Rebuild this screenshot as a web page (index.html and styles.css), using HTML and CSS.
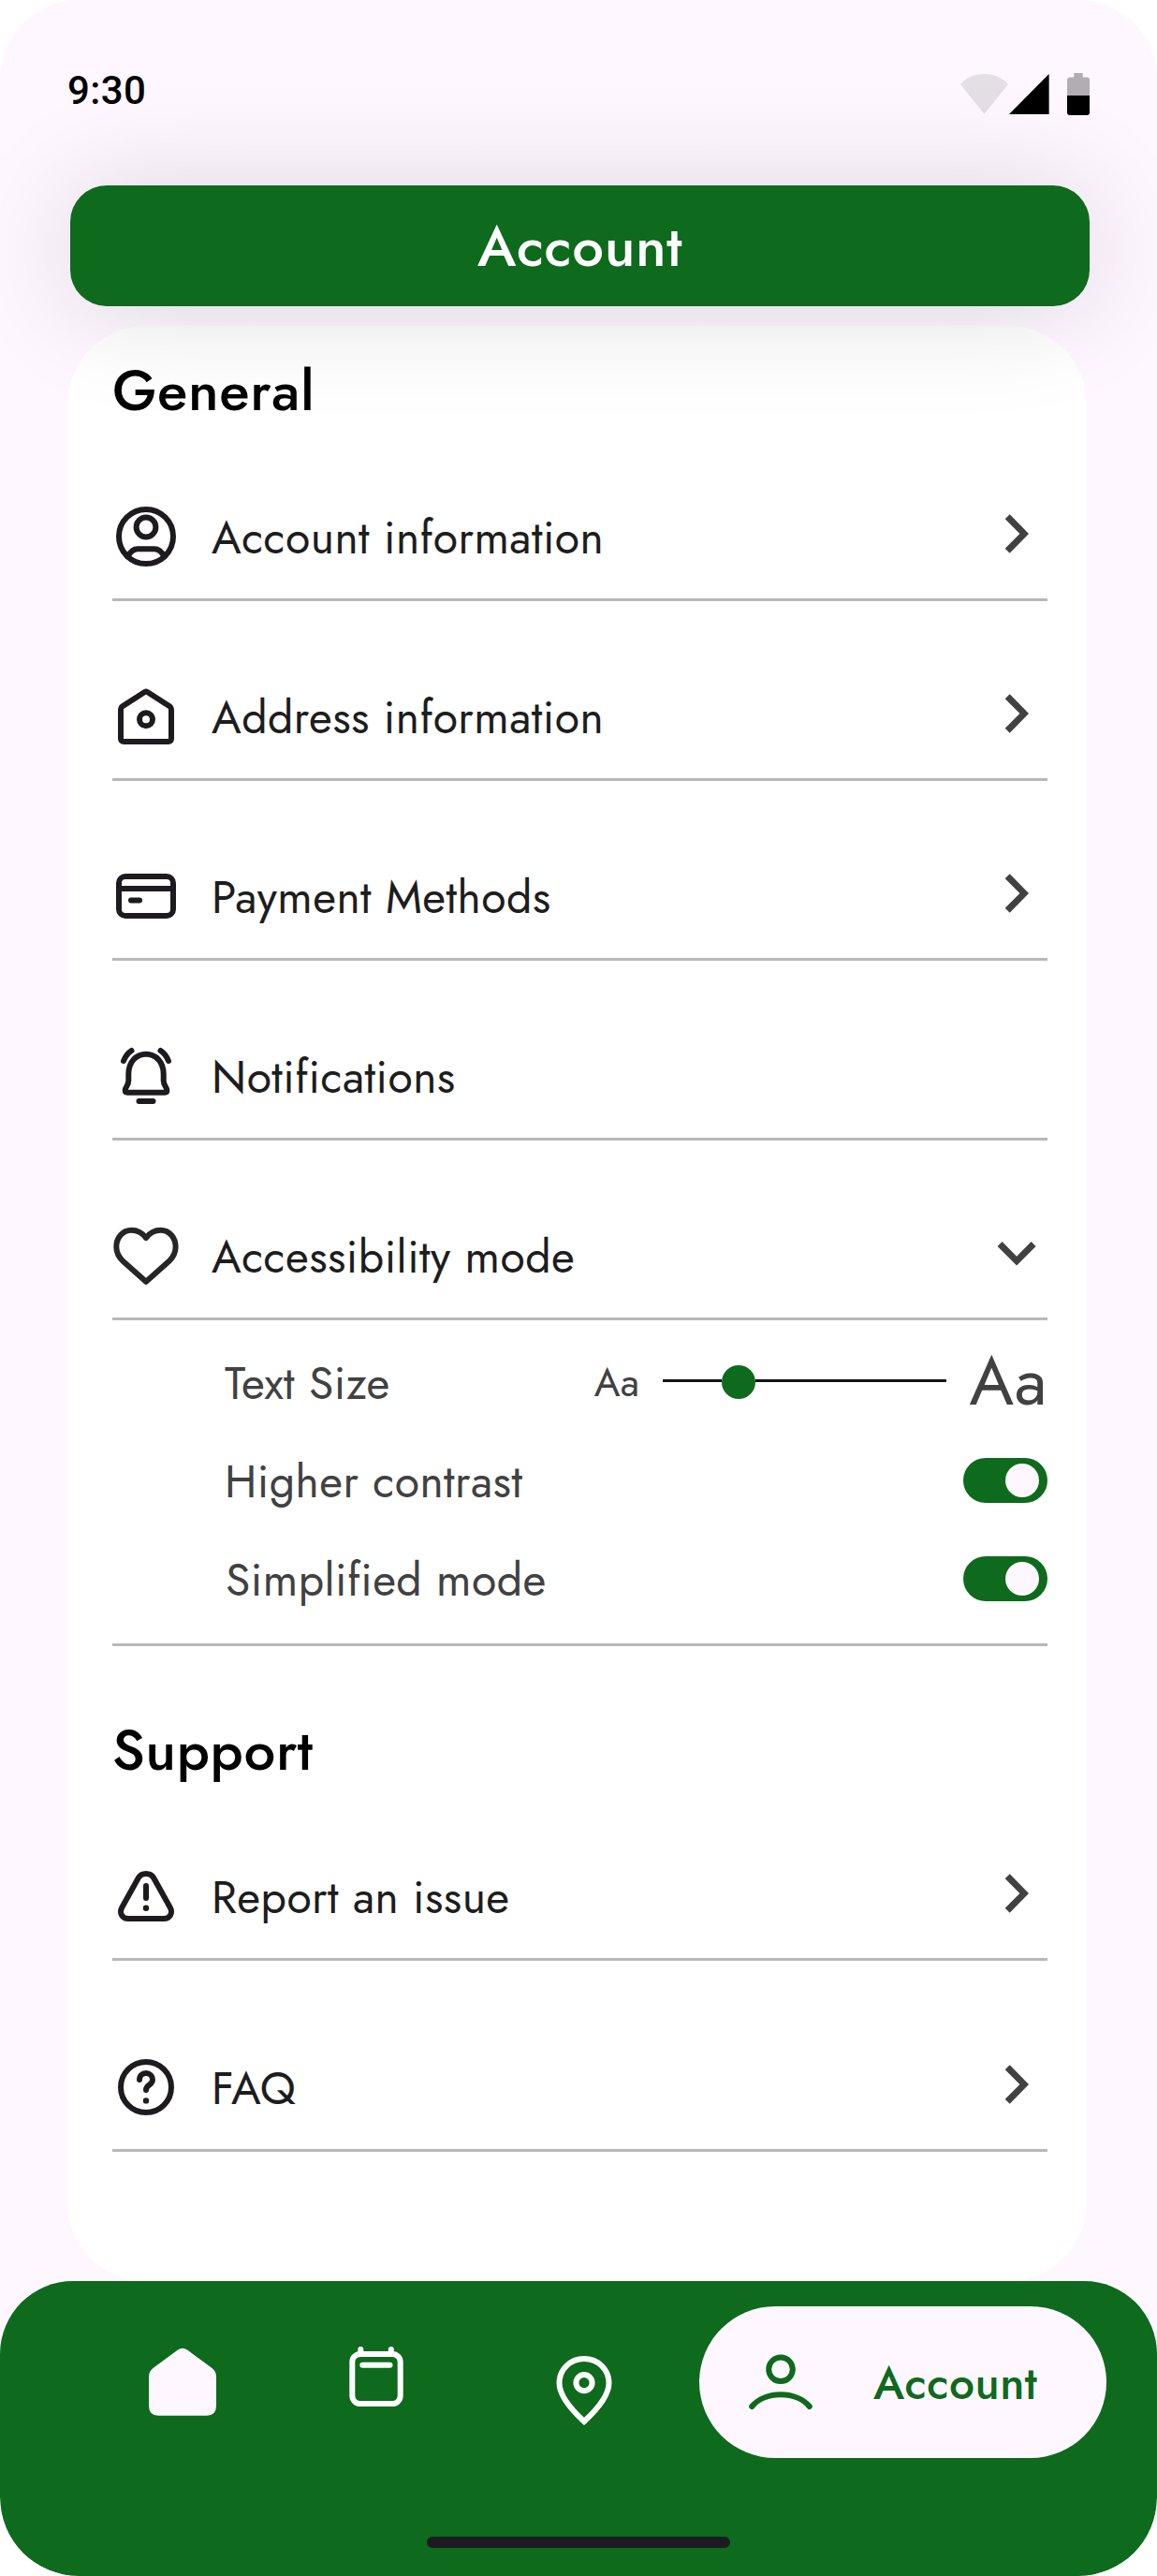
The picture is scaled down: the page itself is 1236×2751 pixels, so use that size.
FILE: index.html
```html
<!DOCTYPE html>
<html lang="en">
<head>
<meta charset="utf-8">
<title>Account</title>
<link rel="stylesheet" href="styles.css">
</head>
<body>
<div class="phone">
  <div class="status">
    <span class="status-time">9:30</span>
    <div class="status-icons">
      <svg class="wifi" width="51" height="45" viewBox="0 0 51 45"><path d="M0 12 C7 4.5 15 1 25.500 1 S44 4.500 51 12 L25.500 43.700 Z" fill="#e4dee5"/></svg>
      <svg class="signal" width="43" height="45" viewBox="0 0 43 45"><path d="M0 44 L42.600 1 V44 Z" fill="#000"/></svg>
      <svg width="24" height="45" viewBox="0 0 24 45"><path d="M0 24 V7.500 Q0 4.500 3 4.500 H7.300 V0 H16.700 V4.500 H21 Q24 4.500 24 7.500 V24 Z" fill="#b2adb3"/><path d="M0 24 H24 V42 Q24 45 21 45 H3 Q0 45 0 42 Z" fill="#000"/></svg>
    </div>
  </div>

  <header class="title-bar"><h1>Account</h1></header>

  <main class="card">
    <h2 class="section-title">General</h2>
    <div class="row">
      <svg class="icon" viewBox="0 0 72 72"><circle cx="36" cy="36" r="29"/><circle cx="36" cy="26" r="10.400"/><path d="M16.500 57.500 C19.500 51.500 22.500 49.200 27 49.200 H45 C49.500 49.200 52.500 51.500 55.500 57.500"/></svg>
      <span class="label">Account information</span>
      <svg class="chevron" viewBox="0 0 66 66"><path d="M20.700 17.300 L25.700 12.300 L46 33 L25.700 53.700 L20.700 48.700 L36.400 33 Z"/></svg>
    </div>
    <div class="row">
      <svg class="icon" viewBox="0 0 72 72"><path d="M9 59.500 V28.500 Q9 26.500 10.500 25.500 L35 9.800 Q36 9.200 37 9.800 L61.500 25.500 Q63 26.500 63 28.500 V59.500 Q63 63 59.500 63 H12.500 Q9 63 9 59.500 Z"/><circle cx="36" cy="39.300" r="7"/></svg>
      <span class="label">Address information</span>
      <svg class="chevron" viewBox="0 0 66 66"><path d="M20.700 17.300 L25.700 12.300 L46 33 L25.700 53.700 L20.700 48.700 L36.400 33 Z"/></svg>
    </div>
    <div class="row">
      <svg class="icon" viewBox="0 0 72 72"><rect x="7" y="15" width="58" height="42" rx="7"/><path d="M7 28 H65 M20 40.500 H29"/></svg>
      <span class="label">Payment Methods</span>
      <svg class="chevron" viewBox="0 0 66 66"><path d="M20.700 17.300 L25.700 12.300 L46 33 L25.700 53.700 L20.700 48.700 L36.400 33 Z"/></svg>
    </div>
    <div class="row">
      <svg class="icon" viewBox="0 0 72 72"><path d="M20.500 9 Q15 12.500 12 20 M51.500 9 Q57 12.500 60 20"/><path d="M17.300 34 C17.300 21 25.500 12.700 36 12.700 S54.700 21 54.700 34 V41 C54.700 47 58.300 47.500 58.300 51.500 Q58.300 53.700 56 53.700 H16 Q13.700 53.700 13.700 51.500 C13.700 47.500 17.300 47 17.300 41 Z M28.500 63 H43.500"/></svg>
      <span class="label">Notifications</span>
    </div>
    <div class="row">
      <svg class="icon heart" viewBox="0 0 72 72"><path d="M36 17 C32 11.500 27 8.700 20.500 8.700 C11 8.700 4.300 17 4.300 26.500 C4.300 33 7 37.500 11 41.500 L36 63.800 L61 41.500 C65 37.500 67.600 33 67.600 26.500 C67.600 17 61 8.700 51.500 8.700 C45 8.700 40 11.500 36 17 Z"/></svg>
      <span class="label">Accessibility mode</span>
      <svg class="chevron" viewBox="0 0 66 66"><path d="M12.600 26 L17.600 21 L33.100 36.700 L48.600 21 L53.600 26 L33.100 46.500 Z"/></svg>
    </div>

    <div class="options">
      <div class="option">
        <span class="option-label">Text Size</span>
        <div class="slider">
          <span class="aa-small">Aa</span>
          <div class="track"><div class="track-start"></div><div class="thumb"></div><div class="track-end"></div></div>
          <span class="aa-large">Aa</span>
        </div>
      </div>
      <div class="option">
        <span class="option-label">Higher contrast</span>
        <div class="toggle"><div class="toggle-knob"></div></div>
      </div>
      <div class="option">
        <span class="option-label simplified">Simplified mode</span>
        <div class="toggle"><div class="toggle-knob"></div></div>
      </div>
    </div>

    <h2 class="section-title support">Support</h2>
    <div class="row">
      <svg class="icon" viewBox="0 0 72 72"><path d="M27.800 16.500 C31 10.500 41 10.500 44.200 16.500 L61.700 48 C65 54 61.500 60 55 60 H17 C10.500 60 7 54 10.300 48 Z M36 25 V38"/><circle class="dot" cx="36" cy="48.700" r="3.200"/></svg>
      <span class="label">Report an issue</span>
      <svg class="chevron" viewBox="0 0 66 66"><path d="M20.700 17.300 L25.700 12.300 L46 33 L25.700 53.700 L20.700 48.700 L36.400 33 Z"/></svg>
    </div>
    <div class="row faq">
      <svg class="icon" viewBox="0 0 72 72"><circle cx="36" cy="36" r="27"/><path d="M29 28 C29 23.500 32 21 36 21 S43 24 43 28 C43 34 36 33 36 39"/><circle class="dot" cx="36" cy="50.400" r="3.200"/></svg>
      <span class="label">FAQ</span>
      <svg class="chevron" viewBox="0 0 66 66"><path d="M20.700 17.300 L25.700 12.300 L46 33 L25.700 53.700 L20.700 48.700 L36.400 33 Z"/></svg>
    </div>
  </main>

  <nav class="nav">
    <div class="nav-items">
      <svg class="nav-home" width="72" height="162" viewBox="0 0 72 162"><path d="M0 75 Q0 69.500 4.500 66 L31 46.600 Q36 43 41 46.600 L67.500 66 Q72 69.500 72 75 V106 Q72 116.700 62 116.700 H10 Q0 116.700 0 106 Z" fill="#fef7ff"/></svg>
      <svg class="nav-calendar" width="60" height="162" viewBox="0 0 60 162"><rect x="4.300" y="51" width="51.400" height="53" rx="8.500"/><path d="M13.300 46 V51 M45.800 46 V51 M15.300 62.700 H44.500"/></svg>
      <svg class="nav-pin" width="60" height="162" viewBox="0 0 60 162"><path d="M30 56 C15 56 3.500 67.500 3.500 82 C3.500 95 16.500 110.500 30 123 C43.500 110.500 56.500 95 56.500 82 C56.500 67.500 45 56 30 56 Z"/><circle cx="30" cy="81.600" r="8.600"/></svg>
      <div class="nav-active">
        <svg width="72" height="162" viewBox="0 0 72 162"><circle cx="36" cy="67.300" r="12.800"/><path d="M5.200 107 C19 90 53 90 66.800 107"/></svg>
        <span>Account</span>
      </div>
    </div>
    <div class="home-indicator"></div>
  </nav>
</div>
</body>
</html>
```
FILE: styles.css
```css
* { box-sizing: border-box; letter-spacing: 0.01em; }

body {
  margin: 0;
  background: #fff;
  font-family: Jost, Lato, sans-serif;
}

h1, h2 { margin: 0; font-weight: 500; }
svg { display: block; flex: none; }

.phone {
  width: 1236px;
  height: 2751px;
  display: flex;
  flex-direction: column;
  background: #fef7ff;
  border-radius: 84px;
  overflow: hidden;
}

/* Status bar */
.status {
  flex: none;
  height: 198px;
  padding: 78px 72px 0;
  display: flex;
  justify-content: space-between;
  align-items: flex-start;
}
.status-time {
  font: 500 42px/38px Roboto, sans-serif;
  color: #000;
}
.status-icons { display: flex; }
.wifi { margin-right: 1px; }
.signal { margin-right: 19px; }

/* Title */
.title-bar {
  flex: none;
  height: 129px;
  margin: 0 72px 21px 75px;
  padding-top: 2px;
  display: flex;
  align-items: center;
  justify-content: center;
  background: #0e6a1c;
  border-radius: 39px;
  box-shadow: 0 4px 120px rgba(0, 0, 0, 0.14);
  position: relative;
  z-index: 1;
}
.title-bar h1 { font-size: 60px; line-height: 87px; color: #fff; }

/* Settings card */
.card {
  flex: none;
  height: 2088px;
  margin: 0 75px 0 72px;
  padding: 0 42px 0 48px;
  background: #fff;
  border-radius: 84px;
}
.section-title {
  height: 102px;
  padding-top: 26px;
  font-size: 60px;
  line-height: 87px;
  color: #000;
}
.section-title.support { height: 144px; padding-top: 68px; }

.row {
  height: 192px;
  padding: 87px 0 30px;
  display: flex;
  align-items: center;
  border-bottom: 3px solid #b8b8b8;
}
.row.faq { height: 204px; padding-top: 99px; }
.icon {
  width: 72px;
  height: 72px;
  margin-right: 34px;
  fill: none;
  stroke: #1d1b20;
  stroke-width: 6;
  stroke-linecap: round;
  stroke-linejoin: round;
}
.icon.heart { stroke: #262626; }
.icon .dot { fill: #1d1b20; stroke: none; }
.label {
  flex: 1;
  padding-top: 3px;
  font-size: 48px;
  line-height: 72px;
  color: #1d1d1d;
}
.chevron {
  width: 66px;
  height: 66px;
  margin-bottom: 6px;
  fill: #414141;
}

/* Accessibility options */
.options {
  height: 348px;
  padding: 13.5px 0 0 120px;
  border-bottom: 3px solid #b8b8b8;
}
.option {
  height: 105px;
  display: flex;
  align-items: center;
  justify-content: space-between;
}
.option-label {
  padding-top: 3px;
  font-size: 48px;
  line-height: 72px;
  color: #414141;
}
.option-label.simplified { padding-left: 1px; }
.slider {
  display: flex;
  align-items: center;
  color: #414141;
}
.aa-small { font-size: 42px; line-height: 60px; padding-top: 1px; }
.aa-large { font-size: 72px; line-height: 102px; padding-bottom: 2px; }
.track {
  width: 303px;
  margin: 0 24.5px;
  display: flex;
  align-items: center;
}
.track-start, .track-end { height: 3px; margin-bottom: 3px; background: #141218; }
.track-start { width: 63px; }
.track-end { flex: 1; }
.thumb { width: 36px; height: 36px; border-radius: 50%; background: #0e6a1c; }

.toggle {
  width: 90px;
  height: 48px;
  padding: 6px 9px;
  display: flex;
  justify-content: flex-end;
  background: #0e6a1c;
  border-radius: 24px;
}
.toggle-knob { width: 36px; height: 36px; border-radius: 50%; background: #fef7ff; }

/* Bottom navigation */
.nav {
  flex: none;
  height: 315px;
  padding-top: 27px;
  display: flex;
  flex-direction: column;
  align-items: center;
  background: #0e6a1c;
  border-radius: 78px 78px 84px 84px;
}
.nav-items { width: 100%; display: flex; padding-left: 159px; }
.nav-calendar, .nav-pin { fill: none; stroke: #fff; stroke-width: 6; stroke-linecap: round; }
.nav-calendar { margin-left: 141px; }
.nav-pin { margin-left: 162px; }
.nav-active {
  width: 435px;
  height: 162px;
  margin-left: 93px;
  padding-left: 51px;
  display: flex;
  align-items: center;
  background: #fef7ff;
  border-radius: 81px;
}
.nav-active svg { fill: none; stroke: #0e6a1c; stroke-width: 6; stroke-linecap: round; }
.nav-active span {
  margin-left: 63px;
  padding-top: 3px;
  font-size: 48px;
  font-weight: 500;
  line-height: 72px;
  color: #0e6a1c;
}
.home-indicator {
  width: 324px;
  height: 12px;
  margin-top: 84px;
  background: #1d1b20;
  border-radius: 6px;
}
```
